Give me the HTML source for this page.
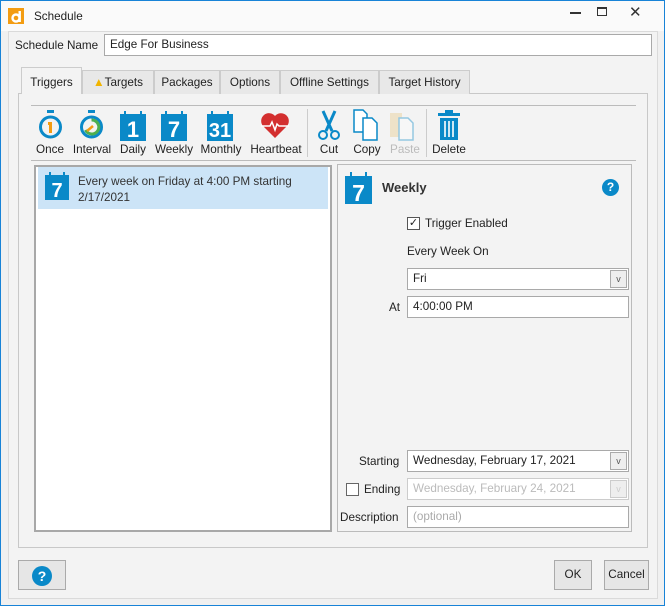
<!DOCTYPE html>
<html><head><style>
*{box-sizing:border-box;margin:0;padding:0}
body{width:665px;height:606px;overflow:hidden;font-family:"Liberation Sans",sans-serif;font-size:11.7px;color:#222;background:#fff}
.a{position:absolute}
.win{position:absolute;left:0;top:0;width:665px;height:606px;border:1px solid #1883d7;background:#f0f0f0}
.tb{position:absolute;left:0;top:0;width:663px;height:30px;background:#fafafa}
.panel{left:7px;top:30px;width:650px;height:568px;border:1px solid #dadada;background:#f3f3f3}
.inp{background:#fff;border:1px solid #a9a9a9;height:22px;padding:3px 5px;white-space:nowrap}
.tab{top:69px;height:24px;border:1px solid #ccc;border-bottom:none;background:#e8e8e8;padding:5px 0 0;text-align:center}
.lbl{text-align:center;width:60px}
.dd{position:absolute;right:1px;top:1px;width:17px;height:18px;border:1px solid #aaa;background:#eee;font-size:9px;text-align:center;line-height:16px;color:#555}
.btn{border:1px solid #aaa;background:#e6e6e6;text-align:center}
</style></head><body>
<div class="win">
<div class="tb">
 <svg class="a" style="left:7px;top:7px" width="16" height="16"><rect width="16" height="16" fill="#f39c12"/><circle cx="8" cy="10" r="3.5" fill="none" stroke="#fff" stroke-width="2.4"/><rect x="10.5" y="3" width="2.4" height="11" fill="#fff"/></svg>
 <div class="a" style="left:33px;top:9px">Schedule</div>
 <div class="a" style="left:569px;top:11px;width:11px;height:2px;background:#333"></div>
 <div class="a" style="left:596px;top:6px;width:10px;height:9px;border:1px solid #333;border-top-width:2px"></div>
 <div class="a" style="left:628px;top:2px;font-size:15px;color:#333">✕</div>
</div>
<div class="a panel"></div>
<div class="a" style="left:14px;top:38px">Schedule Name</div>
<div class="a inp" style="left:103px;top:33px;width:548px">Edge For Business</div>

<div class="a" style="left:17px;top:92px;width:630px;height:455px;border:1px solid #c8c8c8;background:#f3f3f3"></div>
<div class="a tab" style="left:20px;top:66px;width:61px;height:27px;background:#f3f3f3;padding-top:8px">Triggers</div>
<div class="a tab" style="left:81px;width:72px"><span style="color:#f1b400">▲</span>Targets</div>
<div class="a tab" style="left:153px;width:66px">Packages</div>
<div class="a tab" style="left:219px;width:60px">Options</div>
<div class="a tab" style="left:279px;width:99px">Offline Settings</div>
<div class="a tab" style="left:378px;width:91px">Target History</div>

<div class="a" style="left:30px;top:104px;width:605px;height:1px;background:#bbb"></div>
<div class="a" style="left:30px;top:159px;width:605px;height:1px;background:#bbb"></div>
<div class="a" style="left:306px;top:108px;width:1px;height:48px;background:#ccc"></div>
<div class="a" style="left:425px;top:108px;width:1px;height:48px;background:#ccc"></div>

<svg class="a" style="left:36px;top:108px" width="28" height="32"><rect x="10" y="1" width="7" height="3" fill="#0a89c8"/><circle cx="13.5" cy="18" r="10" fill="none" stroke="#0a89c8" stroke-width="3"/><path d="M11 13h4v11h-3v-8h-1z" fill="#f39c12"/></svg>
<svg class="a" style="left:77px;top:108px" width="28" height="32"><rect x="10" y="1" width="7" height="3" fill="#0a89c8"/><circle cx="13.5" cy="18" r="10" fill="none" stroke="#0a89c8" stroke-width="3"/><path d="M13.5 11a7 7 0 1 1-6 10" fill="none" stroke="#4caf50" stroke-width="3"/><path d="M9 22l6-5" stroke="#f39c12" stroke-width="2.5"/></svg>
<svg class="a" style="left:118px;top:108px" width="28" height="32"><rect x="1" y="5" width="26" height="27" fill="#0a89c8"/><path d="M6 2v5M22 2v5" stroke="#0a89c8" stroke-width="2"/><text x="14" y="28" text-anchor="middle" font-family="Liberation Sans" font-weight="bold" font-size="22" fill="#fff">1</text></svg>
<svg class="a" style="left:159px;top:108px" width="28" height="32"><rect x="1" y="5" width="26" height="27" fill="#0a89c8"/><path d="M6 2v5M22 2v5" stroke="#0a89c8" stroke-width="2"/><text x="14" y="28" text-anchor="middle" font-family="Liberation Sans" font-weight="bold" font-size="22" fill="#fff">7</text></svg>
<svg class="a" style="left:205px;top:108px" width="28" height="32"><rect x="1" y="5" width="26" height="27" fill="#0a89c8"/><path d="M6 2v5M22 2v5" stroke="#0a89c8" stroke-width="2"/><text x="14" y="28" text-anchor="middle" font-family="Liberation Sans" font-weight="bold" font-size="20" fill="#fff">31</text></svg>
<svg class="a" style="left:259px;top:110px" width="30" height="28"><path d="M15 27L3 15A7 7 0 0 1 15 5A7 7 0 0 1 27 15Z" fill="#d32f2f"/><path d="M1 15h9l2-4 3 8 2-6 2 2h10" fill="none" stroke="#fff" stroke-width="1.5"/></svg>
<svg class="a" style="left:315px;top:108px" width="26" height="32"><path d="M7 2l9 20M19 2l-9 20" stroke="#0a89c8" stroke-width="3"/><circle cx="7" cy="26" r="4" fill="none" stroke="#0a89c8" stroke-width="2"/><circle cx="19" cy="26" r="4" fill="none" stroke="#0a89c8" stroke-width="2"/></svg>
<svg class="a" style="left:352px;top:108px" width="28" height="32"><path d="M1 1h9l4 4v18H1z" fill="#fff" stroke="#0a89c8" stroke-width="1.5"/><path d="M10 9h9l5 5v17H10z" fill="#fff" stroke="#0a89c8" stroke-width="1.5"/></svg>
<svg class="a" style="left:388px;top:108px" width="28" height="32" opacity=".4"><rect x="1" y="4" width="12" height="24" fill="#e9c98a"/><path d="M10 9h9l5 5v17H10z" fill="#fff" stroke="#0a89c8" stroke-width="1.5"/></svg>
<svg class="a" style="left:436px;top:108px" width="24" height="32"><rect x="1" y="4" width="22" height="3" fill="#0a89c8"/><rect x="8" y="1" width="8" height="3" fill="#0a89c8"/><rect x="3" y="9" width="18" height="22" fill="#0a89c8"/><path d="M8 12v16M12 12v16M16 12v16" stroke="#fff" stroke-width="1.6"/></svg>

<div class="a lbl" style="left:19px;top:142px">Once</div>
<div class="a lbl" style="left:61px;top:142px">Interval</div>
<div class="a lbl" style="left:102px;top:142px">Daily</div>
<div class="a lbl" style="left:143px;top:142px">Weekly</div>
<div class="a lbl" style="left:190px;top:142px">Monthly</div>
<div class="a lbl" style="left:245px;top:142px">Heartbeat</div>
<div class="a lbl" style="left:298px;top:142px">Cut</div>
<div class="a lbl" style="left:336px;top:142px">Copy</div>
<div class="a lbl" style="left:374px;top:142px;color:#bbb">Paste</div>
<div class="a lbl" style="left:418px;top:142px">Delete</div>

<div class="a" style="left:33px;top:164px;width:298px;height:367px;border:2px solid #a8a8a8;background:#fff"></div>
<div class="a" style="left:37px;top:166px;width:290px;height:42px;background:#cce4f7"></div>
<svg class="a" style="left:43px;top:170px" width="26" height="30"><rect x="1" y="4" width="24" height="25" fill="#0a89c8"/><path d="M6 1v4M20 1v4" stroke="#0a89c8" stroke-width="2"/><text x="13" y="26" text-anchor="middle" font-family="Liberation Sans" font-weight="bold" font-size="20" fill="#fff">7</text></svg>
<div class="a" style="left:77px;top:173px;line-height:16px;color:#333">Every week on Friday at 4:00 PM starting<br>2/17/2021</div>

<div class="a" style="left:336px;top:163px;width:295px;height:368px;border:1px solid #bbb"></div>
<svg class="a" style="left:343px;top:170px" width="30" height="34"><rect x="1" y="5" width="27" height="28" fill="#0a89c8"/><path d="M7 1v5M22 1v5" stroke="#0a89c8" stroke-width="2"/><text x="14.5" y="30" text-anchor="middle" font-family="Liberation Sans" font-weight="bold" font-size="23" fill="#fff">7</text></svg>
<div class="a" style="left:381px;top:179px;font-weight:bold;font-size:13px;color:#333">Weekly</div>
<div class="a" style="left:601px;top:178px;width:17px;height:17px;border-radius:50%;background:#0a89c8;color:#fff;font-weight:bold;text-align:center;line-height:17px;font-size:12px">?</div>
<div class="a" style="left:406px;top:216px;width:13px;height:13px;border:1px solid #555;background:#fff;font-size:11px;line-height:11px;text-align:center">✓</div>
<div class="a" style="left:424px;top:216px">Trigger Enabled</div>
<div class="a" style="left:406px;top:244px">Every Week On</div>
<div class="a inp" style="left:406px;top:267px;width:222px">Fri<div class="dd">v</div></div>
<div class="a" style="left:388px;top:300px">At</div>
<div class="a inp" style="left:406px;top:295px;width:222px">4:00:00 PM</div>
<div class="a" style="left:358px;top:454px">Starting</div>
<div class="a inp" style="left:406px;top:449px;width:222px">Wednesday, February 17, 2021<div class="dd">v</div></div>
<div class="a" style="left:345px;top:482px;width:13px;height:13px;border:1px solid #666;background:#fff"></div>
<div class="a" style="left:363px;top:482px">Ending</div>
<div class="a inp" style="left:406px;top:477px;width:222px;color:#bbb;border-color:#ccc">Wednesday, February 24, 2021<div class="dd" style="color:#ccc;border-color:#ccc">v</div></div>
<div class="a" style="left:339px;top:510px">Description</div>
<div class="a inp" style="left:406px;top:505px;width:222px;color:#aaa">(optional)</div>

<div class="a btn" style="left:17px;top:559px;width:48px;height:30px"><div style="margin:5px auto;width:20px;height:20px;border-radius:50%;background:#0a89c8;color:#fff;font-weight:bold;line-height:20px;font-size:14px">?</div></div>
<div class="a btn" style="left:553px;top:559px;width:38px;height:30px;line-height:28px">OK</div>
<div class="a btn" style="left:603px;top:559px;width:45px;height:30px;line-height:28px">Cancel</div>
</div>
</body></html>
